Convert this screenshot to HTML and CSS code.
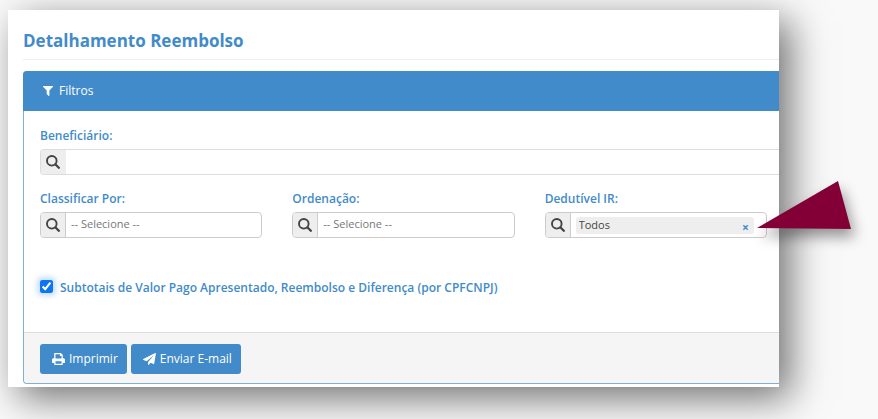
FILE: index.html
```html
<!DOCTYPE html>
<html lang="pt-BR">
<head>
    <meta charset="UTF-8">
    <meta name="viewport" content="width=device-width, initial-scale=1.0">
    <title>Detalhamento Reembolso</title>
    <link rel="stylesheet" href="styles.css">
</head>
<body>
    <svg class="sprite" aria-hidden="true">
        <symbol id="icon-search" viewBox="0 0 14 14">
            <circle cx="5.8" cy="5.8" r="4.8" fill="none" stroke="currentColor" stroke-width="1.9"/>
            <path d="M9.3 9.3l3.5 3.5" stroke="currentColor" stroke-width="2.3" stroke-linecap="round"/>
        </symbol>
    </svg>

    <main class="page">
        <h1>Detalhamento Reembolso</h1>
        <form class="panel">
            <h2 class="panel-heading">
                <svg class="icon-filter" viewBox="0 0 10 10" aria-hidden="true"><path d="M.4 0h9.2c.4 0 .5.4.3.7L6.4 4.4V9.6c0 .4-.4.5-.7.3L3.9 8.3a.6.6 0 0 1-.2-.4V4.4L.1.7C-.1.4 0 0 .4 0z" fill="currentColor"/></svg>
                Filtros
            </h2>
            <div class="panel-body">
                <div class="field field-full">
                    <label for="beneficiario">Beneficiário:</label>
                    <div class="input-group">
                        <span class="addon"><svg><use href="#icon-search"/></svg></span>
                        <input type="text" id="beneficiario" name="beneficiario">
                    </div>
                </div>
                <div class="field">
                    <label for="classificar">Classificar Por:</label>
                    <div class="input-group">
                        <span class="addon"><svg><use href="#icon-search"/></svg></span>
                        <select id="classificar" name="classificar">
                            <option>-- Selecione --</option>
                        </select>
                    </div>
                </div>
                <div class="field">
                    <label for="ordenacao">Ordenação:</label>
                    <div class="input-group">
                        <span class="addon"><svg><use href="#icon-search"/></svg></span>
                        <select id="ordenacao" name="ordenacao">
                            <option>-- Selecione --</option>
                        </select>
                    </div>
                </div>
                <div class="field">
                    <label for="dedutivel">Dedutível IR:</label>
                    <div class="input-group">
                        <span class="addon"><svg><use href="#icon-search"/></svg></span>
                        <div class="chip">
                            <select id="dedutivel" name="dedutivel">
                                <option>Todos</option>
                            </select>
                            <button type="button" class="chip-remove" aria-label="Remover">×</button>
                        </div>
                    </div>
                </div>
                <div class="check">
                    <input type="checkbox" id="subtotais" name="subtotais" checked>
                    <label for="subtotais">Subtotais de Valor Pago Apresentado, Reembolso e Diferença (por CPFCNPJ)</label>
                </div>
            </div>
            <div class="panel-footer">
                <button type="button" class="btn">
                    <svg viewBox="0 0 13 12" aria-hidden="true"><path fill="currentColor" fill-rule="evenodd" d="M2.2 0h6.6l2 2v3.2h.6c.9 0 1.6.7 1.6 1.6v2.7c0 .3-.2.5-.5.5h-1.7v1.5c0 .3-.2.5-.5.5H2.7c-.3 0-.5-.2-.5-.5V10H.5C.2 10 0 9.8 0 9.5V6.8c0-.9.7-1.6 1.6-1.6h.6zM3.5 1.3v4.2h6V3H7.9V1.3zM3.5 8.3v2.4h6V8.3z"/></svg>
                    Imprimir
                </button>
                <button type="button" class="btn">
                    <svg viewBox="0 0 13 12" aria-hidden="true"><path fill="currentColor" d="M12.9.4L11.2 10.7c0 .4-.3.5-.6.4L7.5 9.8 5.7 11.9c-.2.2-.6.1-.6-.3V9L11 2.1 3.7 8.3.4 6.9c-.5-.2-.5-.6-.1-.9L12.2.1c.4-.2.7 0 .7.3z"/></svg>
                    Enviar E-mail
                </button>
            </div>
        </form>
    </main>

    <svg class="pointer" viewBox="0 0 94 48" aria-hidden="true">
        <path d="M0 47L81 0l13 48z" fill="#820036"/>
    </svg>
</body>
</html>
```
FILE: styles.css
```css
* {
    box-sizing: border-box;
}
body {
    position: relative;
    margin: 0;
    padding: 10px 99px 32px 8px;
    background-color: #f9f9f9;
    color: #428bca;
    font-family: "Open Sans", "Noto Sans", sans-serif;
    font-size: 12px;
    line-height: 16px;
}
.sprite {
    position: absolute;
    width: 0;
    height: 0;
}
.page {
    padding: 17px 0 3px 15px;
    background-color: white;
    box-shadow: 11px 11px 36px rgba(0, 0, 0, 0.55);
    overflow: hidden;
}
h1 {
    margin: 0 0 11px;
    padding-bottom: 4px;
    border-bottom: 1px solid #eee;
    font-size: 17px;
    font-weight: 700;
    line-height: 28px;
}
/* the panel runs on past the right edge of the page */
.panel {
    border: 1px solid #7fb0d5;
    border-right: 0;
    border-radius: 4px 0 0 4px;
}
.panel-heading {
    display: flex;
    align-items: center;
    gap: 6px;
    margin: -1px 0 0 -1px;
    padding: 12px 20px;
    border-radius: 4px 0 0 0;
    background-color: #428bca;
    color: white;
    font-size: 12px;
    font-weight: 400;
}
.icon-filter {
    width: 10px;
    height: 10px;
}
.panel-body {
    display: grid;
    grid-template-columns: repeat(3, 1fr);
    gap: 16px 30px;
    padding: 17px 12px 36px 16px;
}
.field {
    min-width: 0;
}
.field-full {
    grid-column: 1 / -1;
    margin-right: -12px;
}
label {
    font-weight: 600;
}
.field label {
    display: block;
    margin-bottom: 5px;
}
.input-group {
    display: flex;
    height: 26px;
    border: 1px solid #ccc;
    border-radius: 4px;
    background-color: white;
}
.field-full .input-group {
    border-color: #ddd;
    border-right: 0;
    border-radius: 4px 0 0 4px;
}
.addon {
    display: flex;
    align-items: center;
    justify-content: center;
    flex: none;
    width: 25px;
    border-right: 1px solid #ccc;
    border-radius: 3px 0 0 3px;
    background-color: #eee;
    color: #444;
}
.field-full .addon {
    border-right-color: #eee;
}
.addon svg {
    width: 14px;
    height: 14px;
}
.input-group input,
.input-group select {
    flex: 1;
    min-width: 0;
    padding: 0 5px 3px;
    border: 0;
    background: none;
    color: #777;
    font: inherit;
    font-size: 11px;
    appearance: none;
}
.input-group .chip {
    display: flex;
    flex: 1;
    align-items: center;
    margin: 4px 12px 3px 5px;
    border-radius: 3px;
    background-color: #eee;
}
.input-group .chip select {
    padding: 0 3px 1px;
    color: #444;
}
.chip-remove {
    padding: 4px 5px 0;
    border: 0;
    background: none;
    color: #428bca;
    font: inherit;
    font-weight: 700;
    line-height: 12px;
}
.check {
    display: flex;
    grid-column: 1 / -1;
    gap: 7px;
    margin-top: 26px;
}
.check input {
    width: 13px;
    height: 13px;
    margin: 0;
    border-radius: 2px;
    accent-color: #0d75ee;
    box-shadow: 0 0 6px 2px #b5d5fb;
}
.panel-footer {
    display: flex;
    gap: 4px;
    padding: 11px 16px 9px;
    border-top: 1px solid #ddd;
    border-radius: 0 0 0 4px;
    background-color: #f5f5f5;
}
.btn {
    display: flex;
    align-items: center;
    gap: 4px;
    padding: 7px 9px 7px 12px;
    border: 0;
    border-radius: 3px;
    background-color: #428bca;
    color: white;
    font: inherit;
    cursor: pointer;
}
.btn svg {
    width: 13px;
    height: 12px;
}
/* callout arrow lying over the edge of the page */
.pointer {
    position: absolute;
    top: 181px;
    right: 27px;
    width: 94px;
    height: 48px;
    overflow: visible;
    filter: drop-shadow(4px 8px 7px rgba(0, 0, 0, 0.4));
}
```
